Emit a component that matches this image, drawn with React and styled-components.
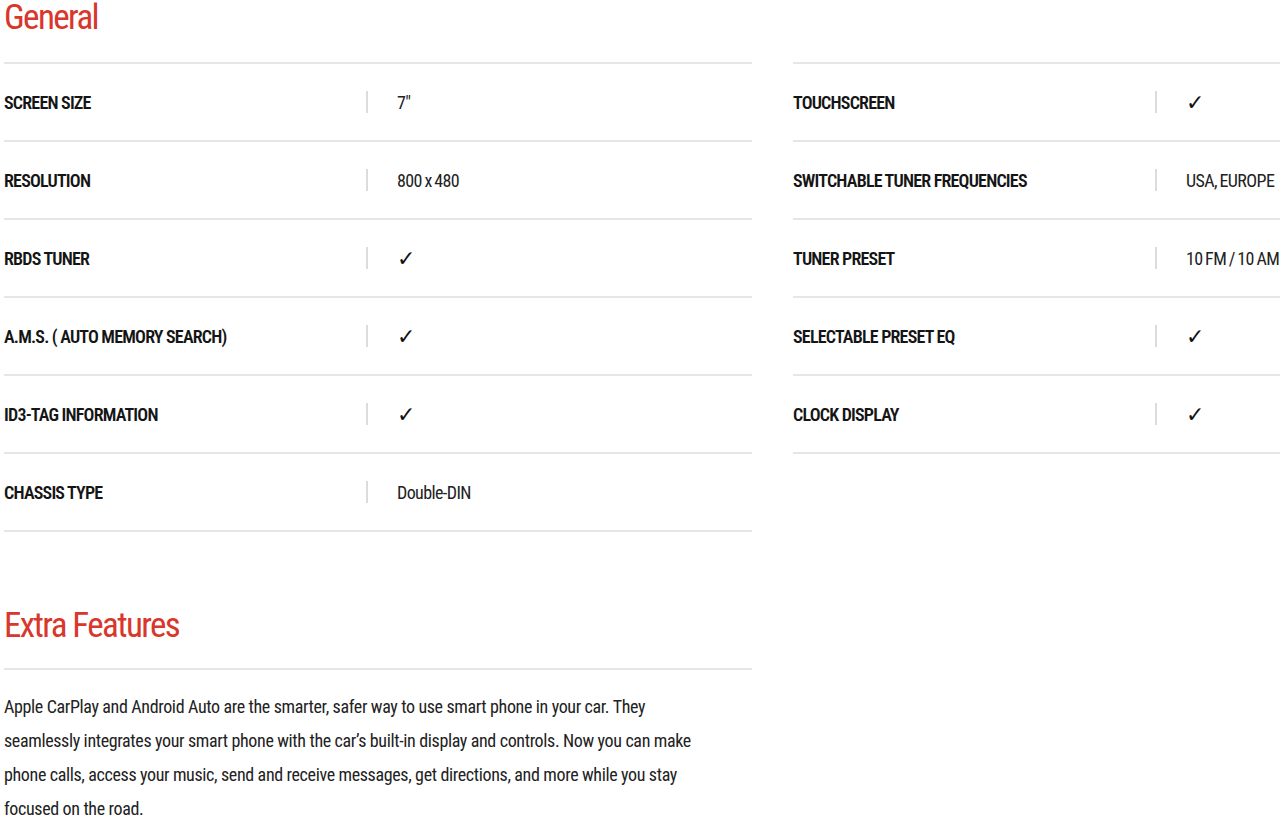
import React from "react";
import styled, { createGlobalStyle } from "styled-components";

const Global = createGlobalStyle`
  html, body { margin: 0; padding: 0; background: #fff; }
  body {
    overflow: hidden;
    font-family: Roboto, "Liberation Sans", sans-serif;
    font-stretch: 75%;
    color: #111;
  }
`;

const Page = styled.div`
  width: 1280px;
  height: 820px;
  overflow: hidden;
  padding-left: 4px;
  box-sizing: border-box;
`;

const Title = styled.h2`
  margin: 0;
  font-weight: 400;
  font-size: 35px;
  line-height: 36px;
  letter-spacing: -1.6px;
  color: #d9362c;
  font-stretch: 75%;
  height: ${(p) => p.$h}px;
  padding-top: ${(p) => p.$top}px;
  box-sizing: border-box;
  border-bottom: ${(p) => (p.$rule ? "2px solid #e6e6e6" : "none")};
  width: 748px;
`;

const SpecGrid = styled.div`
  display: grid;
  grid-template-columns: 748px 748px;
  column-gap: 41px;
  align-items: start;
`;

const Column = styled.div`
  border-top: 2px solid #e6e6e6;
`;

const Row = styled.div`
  display: grid;
  grid-template-columns: 362px 31px 1fr;
  align-items: center;
  height: 78px;
  border-bottom: 2px solid #e6e6e6;
  box-sizing: border-box;
`;

const Key = styled.div`
  font-size: 18px;
  font-weight: 600;
  letter-spacing: -0.8px;
  color: #151515;
  white-space: nowrap;
`;

const Divider = styled.span`
  width: 2px;
  height: 22px;
  background: #dcdcdc;
`;

const Value = styled.div`
  font-size: 18px;
  letter-spacing: -0.6px;
  word-spacing: -1px;
  color: #222;
  white-space: nowrap;
`;

const Check = styled.span`
  font-family: "DejaVu Sans", sans-serif;
  font-stretch: normal;
  font-size: 22px;
  letter-spacing: 0;
  color: #111;
`;

const Paragraph = styled.p`
  margin: 20px 0 0;
  font-size: 18px;
  line-height: 34px;
  letter-spacing: -0.36px;
  color: #222;
  white-space: nowrap;
`;

const left = [
  ["SCREEN SIZE", "7\u2033"],
  ["RESOLUTION", "800 x 480"],
  ["RBDS TUNER", true],
  ["A.M.S. ( AUTO MEMORY SEARCH)", true],
  ["ID3-TAG INFORMATION", true],
  ["CHASSIS TYPE", "Double-DIN"],
];

const right = [
  ["TOUCHSCREEN", true],
  ["SWITCHABLE TUNER FREQUENCIES", "USA, EUROPE"],
  ["TUNER PRESET", "10 FM / 10 AM"],
  ["SELECTABLE PRESET EQ", true],
  ["CLOCK DISPLAY", true],
];

const Spec = ({ k, v }) => (
  <Row>
    <Key>{k}</Key>
    <Divider />
    <Value>{v === true ? <Check>✓</Check> : v}</Value>
  </Row>
);

export default function App() {
  return (
    <>
      <Global />
      <Page>
        <Title $h={62} $top={0}>General</Title>
        <SpecGrid>
          <Column>
            {left.map(([k, v]) => (
              <Spec key={k} k={k} v={v} />
            ))}
          </Column>
          <Column>
            {right.map(([k, v]) => (
              <Spec key={k} k={k} v={v} />
            ))}
          </Column>
        </SpecGrid>
        <section>
          <Title $h={138} $top={76} $rule>Extra Features</Title>
          <Paragraph>
            Apple CarPlay and Android Auto are the smarter, safer way to use smart phone in your car. They
            <br />
            seamlessly integrates your smart phone with the car’s built-in display and controls. Now you can make
            <br />
            phone calls, access your music, send and receive messages, get directions, and more while you stay
            <br />
            focused on the road.
          </Paragraph>
        </section>
      </Page>
    </>
  );
}
